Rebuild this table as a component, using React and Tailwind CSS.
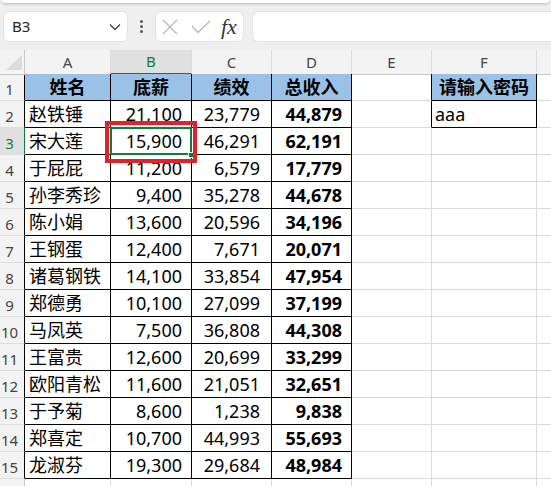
import React from 'react'

const data = [
  ['姓名', '底薪', '绩效', '总收入'],
  ['赵铁锤', '21,100', '23,779', '44,879'],
  ['宋大莲', '15,900', '46,291', '62,191'],
  ['于屁屁', '11,200', '6,579', '17,779'],
  ['孙李秀珍', '9,400', '35,278', '44,678'],
  ['陈小娟', '13,600', '20,596', '34,196'],
  ['王钢蛋', '12,400', '7,671', '20,071'],
  ['诸葛钢铁', '14,100', '33,854', '47,954'],
  ['郑德勇', '10,100', '27,099', '37,199'],
  ['马凤英', '7,500', '36,808', '44,308'],
  ['王富贵', '12,600', '20,699', '33,299'],
  ['欧阳青松', '11,600', '21,051', '32,651'],
  ['于予菊', '8,600', '1,238', '9,838'],
  ['郑喜定', '10,700', '44,993', '55,693'],
  ['龙淑芬', '19,300', '29,684', '48,984'],
  ['', '', '', ''],
]

const cols = 'grid grid-cols-[25px_86px_81px_80px_80px_80px_105px_1fr]'

function ColHeader({ label, selected, boxed }) {
  return (
    <div
      className={
        'flex items-center justify-center border-r border-r-[#dcdcdc] text-[15px] ' +
        (selected
          ? 'bg-[#e0e0e0] text-[#107c41] border-b-2 border-b-[#107c41]'
          : 'bg-[#f3f3f3] text-[#444] border-b ' + (boxed ? 'border-b-[#555]' : 'border-b-[#c8c8c8]'))
      }
    >
      {label}
    </div>
  )
}

function Row({ n, cells }) {
  const inTable = n <= 15
  const inPwd = n <= 2
  const sel = n === 3
  const head = n === 1

  const rowHead =
    'flex items-center justify-center pr-[5px] pt-[5px] border-r border-b border-b-[#dcdcdc] text-[15px] ' +
    (sel
      ? 'bg-[#e0e0e0] text-[#107c41] border-r-[#107c41]'
      : 'bg-[#f3f3f3] text-[#444] ' + (inTable ? 'border-r-black' : 'border-r-[#c8c8c8]'))

  const tb = inTable ? 'border-r-black border-b-black' : 'border-r-[#dadada] border-b-[#dadada]'
  const fill = head ? 'bg-[#9bc2e6] font-bold justify-center' : ''

  return (
    <div className={cols + ' h-[27px]'}>
      {/* row 16 only peeks in at the bottom edge, its number is below the fold */}
      <div className={rowHead}>{inTable ? n : ''}</div>
      <div className={'flex items-center border-r border-b ' + tb + ' ' + (head ? fill : 'pl-[4px]')}>
        {cells[0]}
      </div>
      <div className={'flex items-center border-r border-b ' + tb + ' ' + (head ? fill : 'justify-end pr-[9px]')}>
        {cells[1]}
      </div>
      <div className={'flex items-center border-r border-b ' + tb + ' ' + (head ? fill : 'justify-end pr-[11px]')}>
        {cells[2]}
      </div>
      <div className={'flex items-center border-r border-b font-bold ' + tb + ' ' + (head ? fill : 'justify-end pr-[9px]')}>
        {cells[3]}
      </div>
      <div className={'border-r border-b border-b-[#dadada] ' + (inPwd ? 'border-r-black' : 'border-r-[#dadada]')} />
      <div
        className={
          'flex items-center border-r border-b ' +
          (inPwd ? 'border-r-black border-b-black ' : 'border-r-[#dadada] border-b-[#dadada] ') +
          (head ? 'bg-[#9bc2e6] font-bold justify-center' : 'pl-[3px]')
        }
      >
        {n === 1 ? '请输入密码' : n === 2 ? 'aaa' : ''}
      </div>
      <div className="border-b border-b-[#dadada]" />
    </div>
  )
}

export default function App() {
  return (
    <div className="relative w-[551px] h-[486px] overflow-hidden bg-white text-black font-['Noto_Sans','Noto_Sans_CJK_SC',sans-serif]">
      {/* formula bar */}
      <div className="h-[50px] bg-[#efefef]">
        <div className="h-[3px] mx-[2px] bg-white rounded-b-md shadow-[0_1px_3px_rgba(0,0,0,0.25)]" />
        <div className="flex items-center pl-[3px] mt-[8px] h-[31px]">
          <div className="flex items-center justify-between w-[125px] h-[31px] bg-white rounded-md border border-[#e2e2e2] pl-[8px] pr-[6px] text-[15px] text-[#222]">
            <span>B3</span>
            <svg width="12" height="8" viewBox="0 0 12 8" fill="none" stroke="#444" strokeWidth="1.4">
              <path d="M1 1.5 L6 6.5 L11 1.5" />
            </svg>
          </div>
          <div className="w-[27px] flex flex-col items-center gap-[2px]">
            <span className="w-[3px] h-[3px] rounded-full bg-[#555]" />
            <span className="w-[3px] h-[3px] rounded-full bg-[#555]" />
            <span className="w-[3px] h-[3px] rounded-full bg-[#555]" />
          </div>
          <div className="flex items-center w-[89px] h-[31px] bg-white rounded-md border border-[#e2e2e2] pl-[6px]">
            <svg width="16" height="16" viewBox="0 0 16 16" stroke="#b8b8b8" strokeWidth="1.3">
              <path d="M1 1 L15 15 M15 1 L1 15" />
            </svg>
            <svg className="ml-[13px]" width="20" height="14" viewBox="0 0 20 14" fill="none" stroke="#b8b8b8" strokeWidth="1.3">
              <path d="M1 6 L7 12.5 L19 1" />
            </svg>
            <span className="ml-[10px] font-['Liberation_Serif',serif] italic text-[22px] text-[#333] leading-none">fx</span>
          </div>
          <div className="flex-1 ml-[8px] h-[31px] bg-white rounded-l-md border border-r-0 border-[#e2e2e2]" />
        </div>
      </div>

      {/* column headers */}
      <div className={cols + ' h-[24px]'}>
        <div className="relative bg-[#f3f3f3] border-r border-b border-[#c8c8c8]">
          <svg className="absolute left-[6px] top-[5px]" width="16" height="15" viewBox="0 0 16 15">
            <path d="M0 15 L16 15 L16 0 Z" fill="#dcdcdc" />
          </svg>
        </div>
        <ColHeader label="A" boxed />
        <ColHeader label="B" selected />
        <ColHeader label="C" boxed />
        <ColHeader label="D" boxed />
        <ColHeader label="E" />
        <ColHeader label="F" boxed />
        <div className="bg-[#f3f3f3] border-b border-b-[#c8c8c8]" />
      </div>

      {/* cells */}
      <div className="text-[18px] leading-none">
        {data.map((cells, i) => (
          <Row key={i} n={i + 1} cells={cells} />
        ))}
      </div>

      {/* active cell B3 */}
      <div className="absolute left-[110px] top-[127px] w-[82px] h-[28px] border-2 border-[#107c41]" />
      <div className="absolute left-[188px] top-[152px] w-[6px] h-[6px] bg-[#107c41] border border-white" />

      {/* red highlight */}
      <div className="absolute left-[105px] top-[121px] w-[92px] h-[42px] border-4 border-[#e0232a]" />
    </div>
  )
}
